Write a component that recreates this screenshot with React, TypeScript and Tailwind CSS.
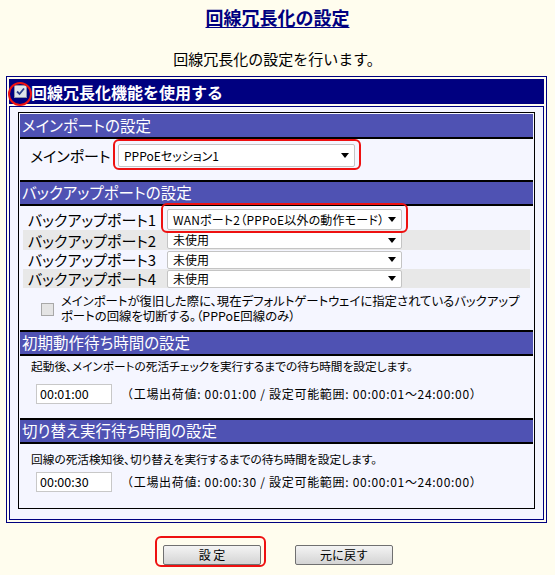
import React from 'react';

const JP = "font-['Noto_Sans_CJK_JP',sans-serif]";
const PALT = "[font-feature-settings:'palt']";

function Arrow() {
  return (
    <svg width="8" height="5" viewBox="0 0 8 5" className="shrink-0">
      <path d="M0 0h8L4 5z" fill="#000" />
    </svg>
  );
}

function Select({ value, className }: { value: string; className: string }) {
  return (
    <div
      className={`flex items-center justify-between bg-white border border-[#c4c4c4] rounded-[2px] pl-[5px] pr-[5px] text-[12px] leading-none text-black whitespace-nowrap ${PALT} ${className}`}
    >
      <span>{value}</span>
      <Arrow />
    </div>
  );
}

function Section({ title, first }: { title: string; first?: boolean }) {
  return (
    <div
      className={`flex items-center bg-[#4f52b3] border-black pl-[2px] text-[15.5px] leading-none text-white ${PALT} ${
        first ? 'h-[25px] border-b-2' : 'h-[26px] border-y-2'
      }`}
    >
      {title}
    </div>
  );
}

function TimeField({ value }: { value: string }) {
  return (
    <div className="flex h-[20px] w-[76px] items-center border border-[#c8c8c8] bg-white pl-[3px] text-[12.5px] leading-none text-black">
      {value}
    </div>
  );
}

const BACKUP = [
  { label: 'バックアップポート2', bg: 'bg-[#e8e8e8]', h: 'h-[20px]' },
  { label: 'バックアップポート3', bg: '', h: 'h-[19px]' },
  { label: 'バックアップポート4', bg: 'bg-[#e8e8e8]', h: 'h-[19px]' },
];

export default function App() {
  return (
    <div className={`relative min-h-screen w-[555px] bg-[#fffdee] text-black ${JP}`}>
      {/* Title */}
      <div className="pt-[6px] text-center text-[18px] font-bold leading-[22px] text-[#000080]">
        <span className="underline underline-offset-[2px]">回線冗長化の設定</span>
      </div>
      <div className="mt-[22px] text-center text-[15px] leading-[18px]">回線冗長化の設定を行います。</div>

      {/* Outer frame */}
      <div className="ml-[6px] mt-[8px] w-[541px] border border-[#000080] p-[2px]">
        <div className="flex h-[25px] items-center gap-[4px] bg-[#000080] pl-[5px] text-[16px] font-bold leading-none text-white">
          <span className="flex h-[13px] w-[13px] items-center justify-center border border-[#8d95a8] bg-[#dfe3ec]">
            <svg width="9" height="9" viewBox="0 0 9 9">
              <path d="M1 4.5l2.5 2.5L8 1.5" stroke="#2b3f8c" strokeWidth="1.8" fill="none" />
            </svg>
          </span>
          回線冗長化機能を使用する
        </div>

        <div className="mt-[2px] border border-[#000080] bg-[#f5f6ff] pl-[8px] pr-[8px] pt-[5px] pb-[10px]">
          <div className="border border-black p-px">
            <Section title="メインポートの設定" first />
            <div className="h-[41px] pt-[5px]">
              <div className="flex h-[23px] items-center">
                <span className={`w-[98px] pl-[10px] text-[15px] leading-none ${PALT}`}>メインポート</span>
                <Select value="PPPoEセッション1" className="h-[23px] w-[237px]" />
              </div>
            </div>

            <Section title="バックアップポートの設定" />
            <div className="px-[3px]">
              <div className="flex h-[24px] items-center pt-[3px]">
                <span className={`w-[144px] pl-[5px] text-[15px] leading-none ${PALT}`}>バックアップポート1</span>
                <Select
                  value="WANポート2（PPPoE以外の動作モード）"
                  className="h-[21px] w-[235px] tracking-[0.2px]"
                />
              </div>
              {BACKUP.map((r) => (
                <div key={r.label} className={`flex items-center ${r.h} ${r.bg}`}>
                  <span className={`w-[144px] pl-[5px] text-[15px] leading-none ${PALT}`}>{r.label}</span>
                  <Select value="未使用" className="h-[18px] w-[235px]" />
                </div>
              ))}
            </div>
            <div className="flex h-[42px] items-center gap-[7px] pl-[21px]">
              <span className="h-[13px] w-[13px] shrink-0 border border-[#a8a8a8] bg-[#e4e4e4]" />
              <p className={`text-[12.4px] leading-[15px] ${PALT}`}>
                メインポートが復旧した際に、現在デフォルトゲートウェイに指定されているバックアップ
                <br />
                ポートの回線を切断する。（PPPoE回線のみ）
              </p>
            </div>

            <Section title="初期動作待ち時間の設定" />
            <div className="h-[62px] pl-[11px] pt-[3px]">
              <p className={`text-[11.7px] leading-[14px] ${PALT}`}>
                起動後、メインポートの死活チェックを実行するまでの待ち時間を設定します。
              </p>
              <div className="mt-[11px] flex items-center gap-[9px] pl-[5px]">
                <TimeField value="00:01:00" />
                <span className="text-[12px] leading-none tracking-[0.7px]">
                  （工場出荷値: 00:01:00 / 設定可能範囲: 00:00:01～24:00:00）
                </span>
              </div>
            </div>

            <Section title="切り替え実行待ち時間の設定" />
            <div className="h-[63px] pl-[11px] pt-[8px]">
              <p className={`text-[11.7px] leading-[14px] ${PALT}`}>
                回線の死活検知後、切り替えを実行するまでの待ち時間を設定します。
              </p>
              <div className="mt-[6px] flex items-center gap-[9px] pl-[5px]">
                <TimeField value="00:00:30" />
                <span className="text-[12px] leading-none tracking-[0.7px]">
                  （工場出荷値: 00:00:30 / 設定可能範囲: 00:00:01～24:00:00）
                </span>
              </div>
            </div>
          </div>
        </div>
      </div>

      {/* Buttons */}
      <div className="mt-[22px] flex justify-center gap-[34px] pl-[1px]">
        <button className="h-[20px] w-[98px] rounded-[2px] border border-[#707070] bg-gradient-to-b from-[#f4f4f4] to-[#d4d4d4] text-[12px] leading-none">
          設 定
        </button>
        <button className="h-[20px] w-[98px] rounded-[2px] border border-[#707070] bg-gradient-to-b from-[#f4f4f4] to-[#d4d4d4] text-[12px] leading-none">
          元に戻す
        </button>
      </div>

      {/* Red annotation marks */}
      <div className="pointer-events-none absolute left-[8px] top-[82px] h-[24px] w-[24px] rounded-full border-[2.5px] border-[#ee1111]" />
      <div className="pointer-events-none absolute left-[113px] top-[139px] h-[31px] w-[248px] rounded-[6px] border-[2.5px] border-[#ee1111]" />
      <div className="pointer-events-none absolute left-[161px] top-[203px] h-[30px] w-[247px] rounded-[6px] border-[2.5px] border-[#ee1111]" />
      <div className="pointer-events-none absolute left-[155px] top-[536px] h-[31px] w-[111px] rounded-[6px] border-[2.5px] border-[#ee1111]" />
    </div>
  );
}
